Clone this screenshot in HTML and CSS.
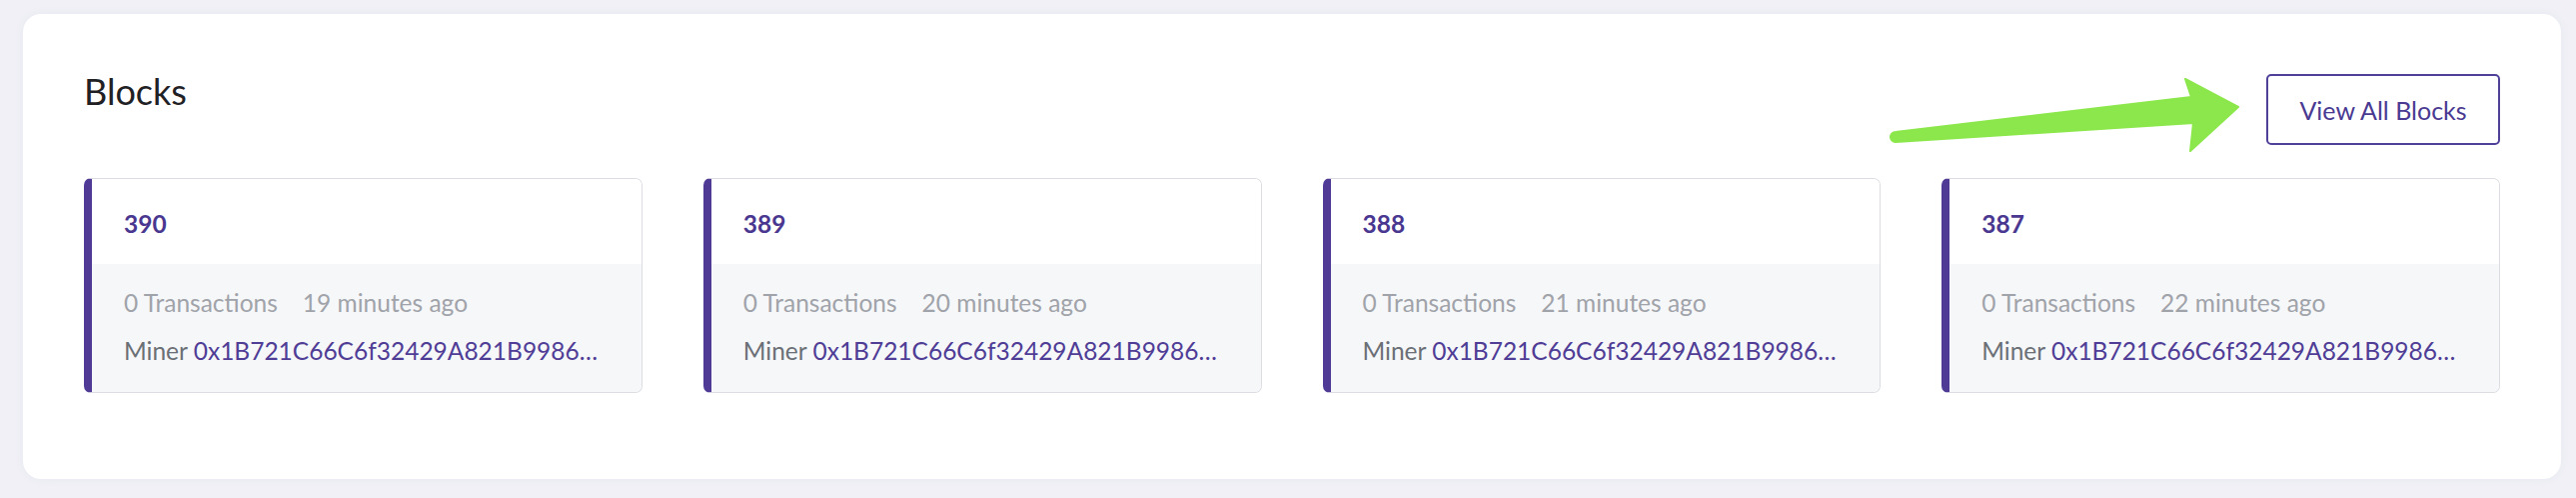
FILE: index.html
```html
<!DOCTYPE html>
<html lang="en">
<head>
<meta charset="utf-8">
<title>Blocks</title>
<link rel="stylesheet" href="styles.css">
</head>
<body>
<section class="panel">
  <div class="panel-head">
    <h2 class="panel-title">Blocks</h2>
    <a class="btn-outline" href="#">View All Blocks</a>
  </div>
  <div class="block-grid">
    <div class="block-card">
      <div class="block-top"><a class="block-num" href="#">390</a></div>
      <div class="block-body">
        <div class="block-meta"><span>0 Transactions</span><span>19 minutes ago</span></div>
        <div class="block-miner">Miner <a class="hash" href="#">0x1B721C66C6f32429A821B9986…</a></div>
      </div>
    </div>
    <div class="block-card">
      <div class="block-top"><a class="block-num" href="#">389</a></div>
      <div class="block-body">
        <div class="block-meta"><span>0 Transactions</span><span>20 minutes ago</span></div>
        <div class="block-miner">Miner <a class="hash" href="#">0x1B721C66C6f32429A821B9986…</a></div>
      </div>
    </div>
    <div class="block-card">
      <div class="block-top"><a class="block-num" href="#">388</a></div>
      <div class="block-body">
        <div class="block-meta"><span>0 Transactions</span><span>21 minutes ago</span></div>
        <div class="block-miner">Miner <a class="hash" href="#">0x1B721C66C6f32429A821B9986…</a></div>
      </div>
    </div>
    <div class="block-card">
      <div class="block-top"><a class="block-num" href="#">387</a></div>
      <div class="block-body">
        <div class="block-meta"><span>0 Transactions</span><span>22 minutes ago</span></div>
        <div class="block-miner">Miner <a class="hash" href="#">0x1B721C66C6f32429A821B9986…</a></div>
      </div>
    </div>
  </div>
</section>
<svg class="annot-arrow" width="370" height="90" viewBox="0 0 370 90" aria-hidden="true">
  <path d="M17,62 L313,27 L307,9 L360,37 L312,81 L315,53 L17,72 A5,5 0 0 1 17,62 Z" fill="#8be74b" stroke="#8be74b" stroke-width="2" stroke-linejoin="round"/>
</svg>
</body>
</html>
```
FILE: styles.css
```css
* { box-sizing: border-box; }

html, body {
  margin: 0;
  padding: 0;
}

body {
  position: relative;
  background: #f0f0f6;
  font-family: "Lato", "Noto Sans", sans-serif;
  color: #212529;
  padding: 14px 15px 19px 23px;
  min-height: 498px;
}

.panel {
  background: #ffffff;
  border-radius: 18px;
  box-shadow: 0 0 12px rgba(60, 50, 120, 0.04);
  padding: 55px 61px 86px 61px;
}

.panel-head {
  display: flex;
  justify-content: space-between;
  align-items: flex-start;
  margin-bottom: 33px;
}

.panel-title {
  margin: 0;
  font-size: 36px;
  line-height: 44px;
  font-weight: 400;
  color: #1f2124;
}

.btn-outline {
  margin-top: 5px;
  width: 234px;
  height: 71px;
  display: flex;
  align-items: center;
  justify-content: center;
  border: 2px solid #51409a;
  border-radius: 5px;
  color: #4a3a92;
  font-size: 25px;
  line-height: 30px;
  text-decoration: none;
}

.block-grid {
  display: grid;
  grid-template-columns: repeat(4, 1fr);
  gap: 61px;
}

.block-card {
  border: 1px solid #dcdde2;
  border-left: 8px solid #4f3b96;
  border-radius: 7px;
  overflow: hidden;
  min-width: 0;
}

.block-top {
  background: #ffffff;
  padding: 30px 40px 25px 32px;
  height: 85px;
}

.block-num {
  font-size: 24.5px;
  line-height: 30px;
  font-weight: 700;
  color: #4a3790;
  text-decoration: none;
}

.block-body {
  background: #f6f7f9;
  padding: 24px 40px 26px 32px;
}

.block-meta {
  display: flex;
  gap: 25px;
  font-size: 24.5px;
  line-height: 30px;
  color: #a0a3a9;
  margin-bottom: 18px;
}

.block-miner {
  font-size: 24.5px;
  line-height: 30px;
  color: #6b6f76;
  white-space: nowrap;
  overflow: hidden;
}

.hash {
  color: #4f3d96;
  text-decoration: none;
}

.annot-arrow {
  position: absolute;
  left: 1880px;
  top: 70px;
}
```
